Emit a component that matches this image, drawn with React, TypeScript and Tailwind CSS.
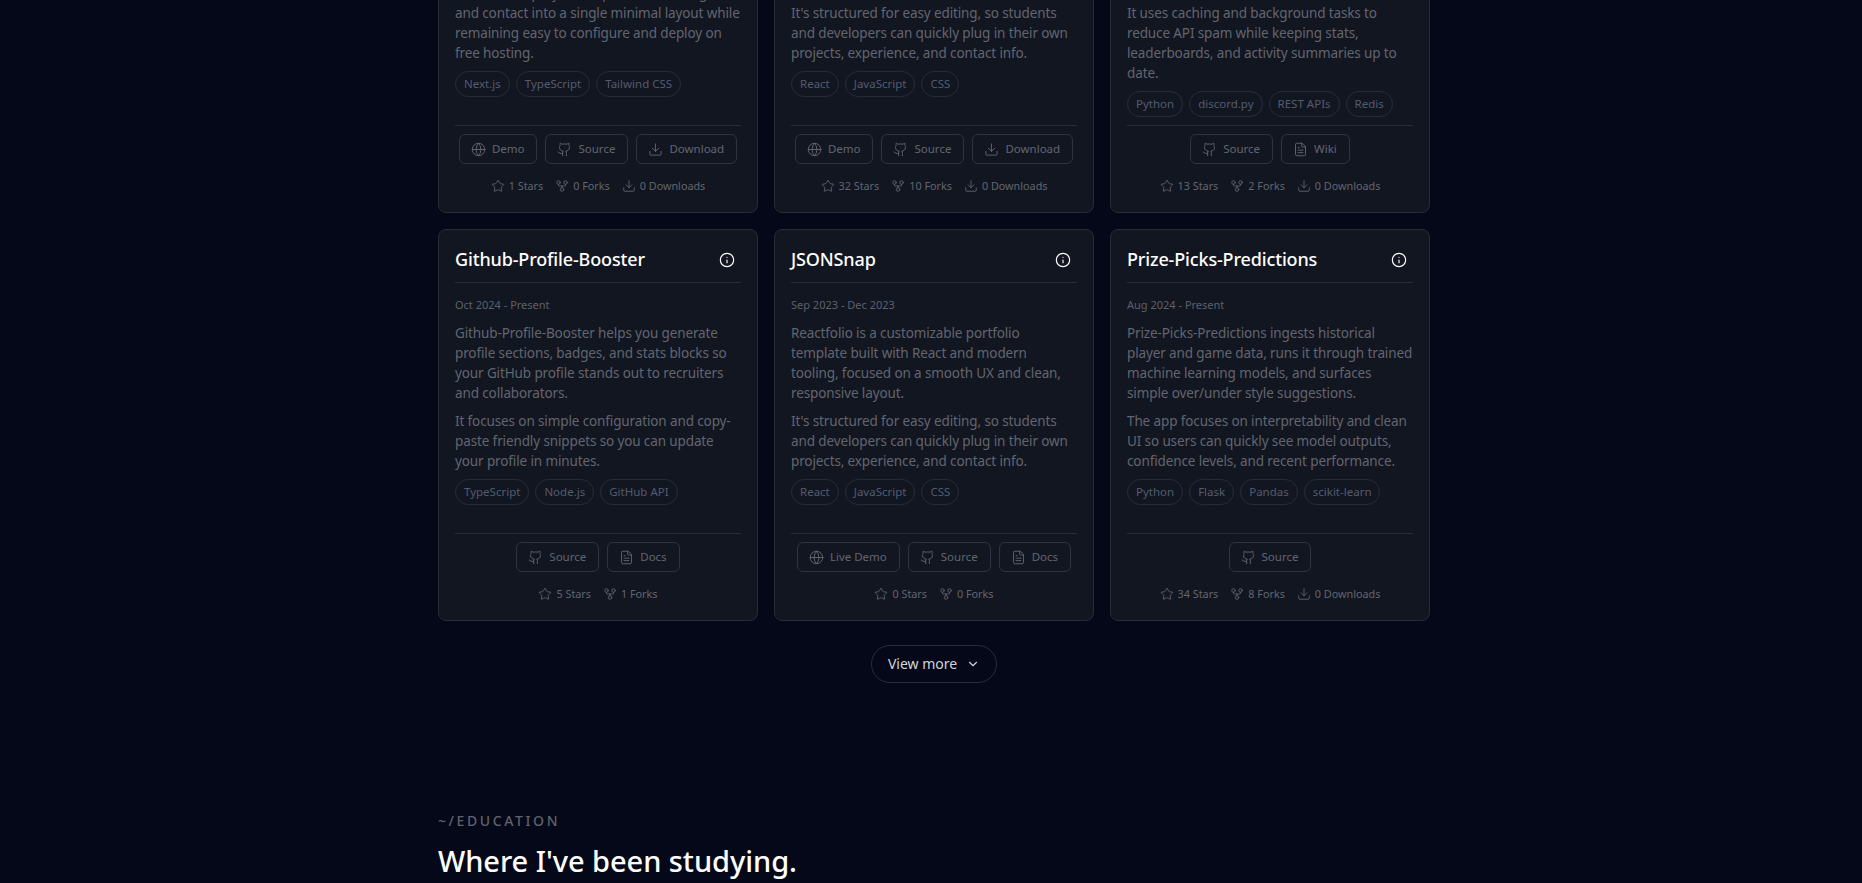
import React from 'react';
import { Star, GitFork, Download, Globe, Github, FileText, Info, ChevronDown } from 'lucide-react';

type LinkItem = { label: string; icon: React.ElementType };
type Project = {
  title: string;
  date: string;
  text: string[];
  tags: string[];
  links: LinkItem[];
  stars: number;
  forks: number;
  downloads?: number;
};

const demo = { label: 'Demo', icon: Globe };
const liveDemo = { label: 'Live Demo', icon: Globe };
const source = { label: 'Source', icon: Github };
const download = { label: 'Download', icon: Download };
const docs = { label: 'Docs', icon: FileText };
const wiki = { label: 'Wiki', icon: FileText };

const reactfolioSecond =
  "It's structured for easy editing, so students and developers can quickly plug in their own projects, experience, and contact info.";

const projects: Project[] = [
  {
    title: 'Portfolio-Website',
    date: 'Jan 2025 - Present',
    text: [
      'Portfolio-Website is a personal site built to present work in one place, with fast page loads and clean type.',
      'It combines projects, experience, writing,\nand contact into a single minimal layout while remaining easy to configure and deploy on free hosting.',
    ],
    tags: ['Next.js', 'TypeScript', 'Tailwind CSS'],
    links: [demo, source, download],
    stars: 1,
    forks: 0,
    downloads: 0,
  },
  {
    title: 'Reactfolio',
    date: 'Sep 2023 - Dec 2023',
    text: [
      'Reactfolio is a customizable portfolio template built with React and modern tooling, focused on a smooth UX and clean, responsive layout.',
      reactfolioSecond,
    ],
    tags: ['React', 'JavaScript', 'CSS'],
    links: [demo, source, download],
    stars: 32,
    forks: 10,
    downloads: 0,
  },
  {
    title: 'Discord-Stats-Bot',
    date: 'Mar 2024 - Present',
    text: [
      'Discord-Stats-Bot connects a server to public game APIs and posts player profiles, match results, and rankings through simple slash commands.',
      'It uses caching and background tasks to reduce API spam while keeping stats, leaderboards, and activity summaries up to date.',
    ],
    tags: ['Python', 'discord.py', 'REST APIs', 'Redis'],
    links: [source, wiki],
    stars: 13,
    forks: 2,
    downloads: 0,
  },
  {
    title: 'Github-Profile-Booster',
    date: 'Oct 2024 - Present',
    text: [
      'Github-Profile-Booster helps you generate profile sections, badges, and stats blocks so your GitHub profile stands out to recruiters and collaborators.',
      'It focuses on simple configuration and copy-paste friendly snippets so you can update your profile in minutes.',
    ],
    tags: ['TypeScript', 'Node.js', 'GitHub API'],
    links: [source, docs],
    stars: 5,
    forks: 1,
  },
  {
    title: 'JSONSnap',
    date: 'Sep 2023 - Dec 2023',
    text: [
      'Reactfolio is a customizable portfolio template built with React and modern tooling, focused on a smooth UX and clean, responsive layout.',
      reactfolioSecond,
    ],
    tags: ['React', 'JavaScript', 'CSS'],
    links: [liveDemo, source, docs],
    stars: 0,
    forks: 0,
  },
  {
    title: 'Prize-Picks-Predictions',
    date: 'Aug 2024 - Present',
    text: [
      'Prize-Picks-Predictions ingests historical player and game data, runs it through trained machine learning models, and surfaces simple over/under style suggestions.',
      'The app focuses on interpretability and clean UI so users can quickly see model outputs, confidence levels, and recent performance.',
    ],
    tags: ['Python', 'Flask', 'Pandas', 'scikit-learn'],
    links: [source],
    stars: 34,
    forks: 8,
    downloads: 0,
  },
];

const ProjectCard: React.FC<{ project: Project }> = ({ project }) => (
  <div className="flex flex-col rounded-lg border border-[#282c39] bg-[#121621] p-4 pt-[15px]">
    <div className="flex items-center justify-between border-b border-[#282c39] pb-[9px]">
      <h3 className="text-[18px] leading-7 font-medium tracking-[-0.15px] text-white">{project.title}</h3>
      <span className="px-[6px] pt-[7px] pb-[5px] text-white">
        <Info size={16} strokeWidth={1.75} />
      </span>
    </div>
    <p className="mt-[14px] text-[11px] leading-4 text-[#5c606b]">{project.date}</p>
    <div className="mt-[10px] flex flex-col gap-2">
      {project.text.map((line) => (
        <p key={line} className="text-[13.5px] leading-5 tracking-[-0.12px] whitespace-pre-line text-[#62656f]">
          {line}
        </p>
      ))}
    </div>
    <div className="mt-2 flex flex-wrap gap-[6px]">
      {project.tags.map((tag) => (
        <span
          key={tag}
          className="rounded-full border border-[#282c39] px-2 py-[5px] text-[11.5px] leading-[14px] text-[#535b70]"
        >
          {tag}
        </span>
      ))}
    </div>
    <div className="mt-auto">
      <div className="mt-2 flex justify-center gap-2 border-t border-[#282c39] pt-2">
        {project.links.map(({ label, icon: Icon }) => (
          <a
            key={label}
            className="flex h-[30px] items-center gap-[6px] rounded-md border border-[#2f333f] pr-3 pl-[11px] text-[11.5px] text-[#62656f]"
          >
            <Icon size={15} strokeWidth={1.5} />
            {label}
          </a>
        ))}
      </div>
      <div className="mt-[14px] mb-[2px] flex h-[16px] justify-center gap-3 text-[10.8px] text-[#62656f]">
        <span className="flex items-center gap-1">
          <Star size={14} strokeWidth={1.5} />
          {project.stars} Stars
        </span>
        <span className="flex items-center gap-1">
          <GitFork size={14} strokeWidth={1.5} />
          {project.forks} Forks
        </span>
        {project.downloads !== undefined && (
          <span className="flex items-center gap-1">
            <Download size={14} strokeWidth={1.5} />
            {project.downloads} Downloads
          </span>
        )}
      </div>
    </div>
  </div>
);

const App: React.FC = () => {
  return (
    <div className="h-[883px] overflow-hidden bg-[#040818] font-['Noto_Sans',sans-serif]">
      <div className="mx-auto -mt-[179px] w-[992px] translate-x-[3px]">
        <div className="grid auto-rows-fr grid-cols-3 gap-4">
          {projects.map((project) => (
            <ProjectCard key={project.title} project={project} />
          ))}
        </div>
        <div className="mt-6 flex justify-center">
          <button className="flex h-[38px] items-center gap-[9px] rounded-full border border-[#282c39] px-4 text-sm text-[#d1d5db]">
            View more
            <ChevronDown size={14} strokeWidth={2} />
          </button>
        </div>
        <section className="mt-[128px]">
          <p className="text-sm leading-5 font-medium tracking-[2.6px] text-[#5f626c]">~/EDUCATION</p>
          <h2 className="mt-3 text-[29px] leading-9 font-medium tracking-[-0.05px] text-white">Where I've been studying.</h2>
        </section>
      </div>
    </div>
  );
};

export default App;
